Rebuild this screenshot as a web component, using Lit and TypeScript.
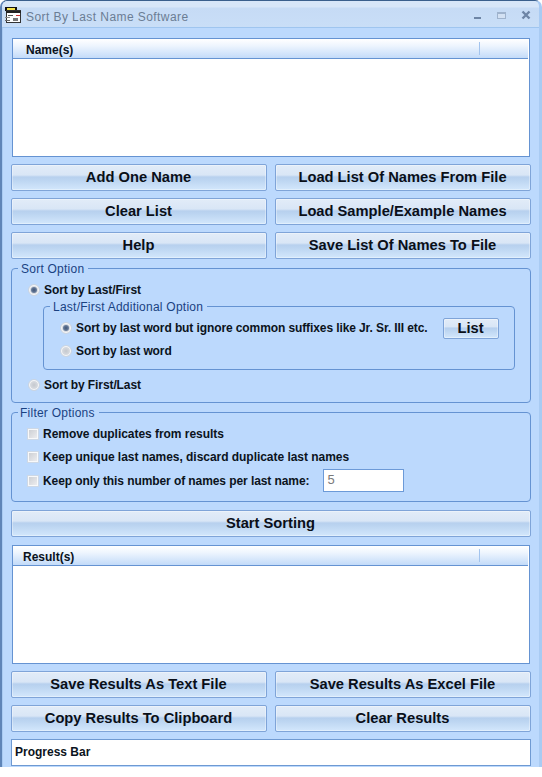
import { LitElement, html, css, svg } from "lit";
import { customElement } from "lit/decorators.js";

@customElement("app-root")
export class AppRoot extends LitElement {
  static styles = css`
    :host { display: block; width: 542px; height: 777px; background: #fff; font-family: "Liberation Sans", Arial, sans-serif; color: #000; }
    * { box-sizing: border-box; }
    .window { width: 542px; height: 767px; background: #bcd9fd; border-radius: 7px 7px 0 0; border-top: 1px solid #3a5f8c; border-left: 2px solid #5f85b8; border-right: 3px solid #a9cbf3; box-shadow: inset 1px 0 0 #a9cbf3; overflow: hidden; display: flex; flex-direction: column; }
    .title { height: 27px; flex: none; margin-left: -1px; display: flex; align-items: center; padding: 0 0 0 4px; background: linear-gradient(#d7e6f8 0, #d7e6f8 6px, #c6dbf5 7px, #c9def7 100%); border-bottom: 1px solid #9fc5ef; }
    .app-icon { width: 17px; height: 17px; flex: none; margin: 2px 4px 0 0; }
    .title-text { font-size: 12px; letter-spacing: 0.43px; color: #6b7d94; flex: 1; padding-top: 6px; }
    .controls { display: flex; align-items: center; }
    .controls svg { display: block; }
    .content { flex: 1; display: flex; flex-direction: column; padding: 10px 8px 0 9px; }
    .list { height: 119px; flex: none; margin: 0 1px; background: #fff; border: 1px solid #6593d2; display: flex; flex-direction: column; }
    .list-head { height: 20px; flex: none; display: flex; align-items: center; background: linear-gradient(#ffffff, #eef5fe 35%, #c3dbf9); border-bottom: 1px solid #6593d2; margin-right: 1px; font-size: 12px; font-weight: 700; color: #0a1220; }
    .list-head .name { flex: 1; height: 100%; display: flex; align-items: center; padding-top: 2px; }
    .list-head .sep { width: 1px; height: 13px; background: #a3c4ee; margin-right: 48px; }
    .names .name { padding-left: 13px; }
    .results .name { padding-left: 10px; }
    .btn-grid { display: grid; grid-template-columns: 256px 256px; column-gap: 8px; row-gap: 7px; }
    .btn { height: 27px; display: flex; align-items: center; justify-content: center; border: 1px solid #7fa4d8; border-radius: 2px; background: linear-gradient(#e2ecf8 0, #d9e6f6 40%, #b7d0ee 48%, #bcd5f1 60%, #d3e7fc 100%); box-shadow: inset 0 0 0 1px rgba(255,255,255,.35); font-size: 14.7px; font-weight: 700; color: #0a0f18; padding: 0 1px 1px 0; white-space: nowrap; }
    .top-grid { margin-top: 7px; }
    .bottom-grid { margin-top: 7px; }
    fieldset { margin: 0; padding: 0; border: 1px solid #6593d2; border-radius: 4px; min-width: 0; }
    legend { font-size: 12px; color: #1a4282; padding: 0 4px 0 3px; line-height: 13px; letter-spacing: 0.02em; margin-left: -10px; }
    legend span { position: relative; top: 1px; }
    .sort { height: 141px; margin-top: 3px; padding: 0 15px 0 16px; }
    .row { display: flex; align-items: center; font-size: 12px; font-weight: 700; color: #0b1320; white-space: nowrap; letter-spacing: -0.1px; }
    .radio { width: 12px; height: 12px; border-radius: 50%; flex: none; margin-right: 4px; border: 1px solid #cbd5e2; box-shadow: inset 0 0 0 1px #f8f9fa; background: radial-gradient(circle, #c4c8ce 0, #d8dbe0 55%, #f7f7f8 100%); display: flex; align-items: center; justify-content: center; }
    .radio.on::after { content: ""; width: 6px; height: 6px; border-radius: 50%; background: radial-gradient(#3f5474, #8397b5); }
    .first { margin-top: 8px; height: 14px; }
    .inner { height: 70px; margin: 3px 0 0 15px; padding: 0 15px 0 16px; }
    .inner-row { height: 22px; }
    .inner-main { justify-content: space-between; margin-top: 4px; }
    .inner-sub { padding-top: 1px; }
    .last { margin-top: 8px; height: 14px; }
    .small-btn { width: 56px; height: 21px; flex: none; border-radius: 2px; letter-spacing: 0; }
    .filter { height: 96px; margin-top: 3px; padding: 0 0 0 15px; }
    .filter legend { margin-left: -9px; padding: 0 4px 0 2px; }
    .check { width: 12px; height: 12px; flex: none; margin-right: 4px; border: 1px solid #cdd8e6; box-shadow: inset 0 0 0 1px #f8f9fa; background: linear-gradient(135deg, #c9ccd1, #f0f0f2); }
    .filter .row { height: 15px; letter-spacing: -0.04px; }
    .filter .r1 { margin-top: 7px; }
    .filter .r2 { margin-top: 8px; }
    .filter .r3 { margin-top: 5px; height: 24px; letter-spacing: -0.08px; }
    .num { width: 81px; height: 23px; flex: none; margin: -2px 0 0 14px; background: #fff; border: 1px solid #6c9ad8; font-size: 13px; font-weight: 400; color: #7a7a7a; padding: 2px 0 0 3px; display: flex; align-items: flex-start; }
    .start { margin-top: 8px; flex: none; }
    .results { margin-top: 8px; }
    .progress { height: 27px; flex: none; margin-top: 7px; background: #fff; border: 1px solid #6f9ad2; font-size: 12px; font-weight: 700; display: flex; align-items: center; padding: 0 0 1px 3px; color: #0b1320; }
  `;

  private icon() {
    return svg`<svg class="app-icon" viewBox="0 0 17 17" shape-rendering="crispEdges">
      <rect x="0" y="0" width="12" height="4" fill="#111"/>
      <rect x="2" y="1" width="8" height="2" fill="#f5e24a"/>
      <rect x="1.5" y="3.5" width="14" height="12" fill="#fff" stroke="#333"/>
      <rect x="1" y="4" width="15" height="2" fill="#222"/>
      <rect x="3" y="8" width="5" height="1" fill="#555"/>
      <rect x="11" y="8" width="4" height="1" fill="#c33"/>
      <rect x="0" y="10" width="5" height="1" fill="#888"/>
      <rect x="8" y="11" width="5" height="3" fill="#777"/>
      <rect x="0" y="13" width="5" height="1" fill="#666"/>
    </svg>`;
  }

  private controls() {
    return html`<div class="controls">
      <svg width="66" height="26" viewBox="0 0 66 26" shape-rendering="crispEdges">
        <rect x="1" y="16" width="7" height="2" fill="#6e85a5"/>
        <rect x="24.5" y="11.5" width="8" height="6" fill="#d3e1f3" stroke="#9fb3cd"/>
        <rect x="24" y="11" width="9" height="2" fill="#9fb3cd"/>
        <path d="M49.5 10.5 L56.5 17.5 M56.5 10.5 L49.5 17.5" stroke="#6e85a5" stroke-width="2.4" fill="none" shape-rendering="auto"/>
      </svg>
    </div>`;
  }

  private head(label: string) {
    return html`<div class="list-head"><div class="name">${label}</div><div class="sep"></div></div>`;
  }

  render() {
    return html`<div class="window">
      <div class="title">${this.icon()}<div class="title-text">Sort By Last Name Software</div>${this.controls()}</div>
      <div class="content">
        <div class="list names">${this.head("Name(s)")}</div>
        <div class="btn-grid top-grid">
          <div class="btn">Add One Name</div><div class="btn">Load List Of Names From File</div>
          <div class="btn">Clear List</div><div class="btn">Load Sample/Example Names</div>
          <div class="btn">Help</div><div class="btn">Save List Of Names To File</div>
        </div>
        <fieldset class="sort">
          <legend><span>Sort Option</span></legend>
          <div class="row first"><span class="radio on"></span>Sort by Last/First</div>
          <fieldset class="inner">
            <legend><span>Last/First Additional Option</span></legend>
            <div class="row inner-row inner-main"><span class="row"><span class="radio on"></span>Sort by last word but ignore common suffixes like Jr. Sr. III etc.</span><div class="btn small-btn">List</div></div>
            <div class="row inner-row inner-sub"><span class="radio"></span>Sort by last word</div>
          </fieldset>
          <div class="row last"><span class="radio"></span>Sort by First/Last</div>
        </fieldset>
        <fieldset class="filter">
          <legend><span>Filter Options</span></legend>
          <div class="row r1"><span class="check"></span>Remove duplicates from results</div>
          <div class="row r2"><span class="check"></span>Keep unique last names, discard duplicate last names</div>
          <div class="row r3"><span class="check"></span>Keep only this number of names per last name:<div class="num">5</div></div>
        </fieldset>
        <div class="btn start">Start Sorting</div>
        <div class="list results">${this.head("Result(s)")}</div>
        <div class="btn-grid bottom-grid">
          <div class="btn">Save Results As Text File</div><div class="btn">Save Results As Excel File</div>
          <div class="btn">Copy Results To Clipboard</div><div class="btn">Clear Results</div>
        </div>
        <div class="progress">Progress Bar</div>
      </div>
    </div>`;
  }
}
